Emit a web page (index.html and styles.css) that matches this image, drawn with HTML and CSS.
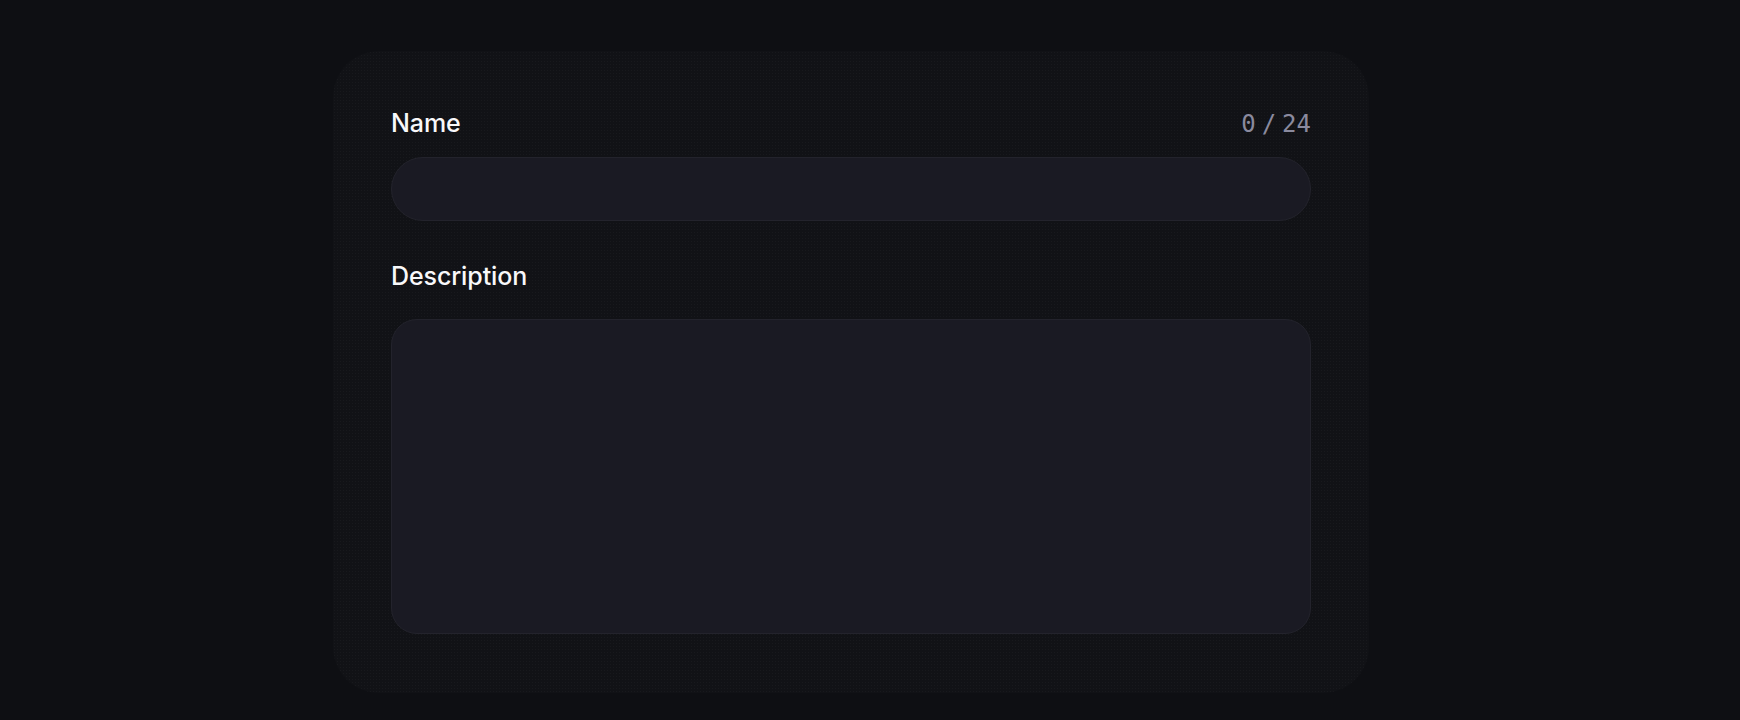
FILE: index.html
```html
<!DOCTYPE html>
<html lang="en">
<head>
<meta charset="utf-8">
<title>Form</title>
<link rel="stylesheet" href="styles.css">
</head>
<body>
<main class="page">
  <form class="card">
    <div class="field field-name">
      <div class="label-row">
        <label class="label" for="name">Name</label>
        <span class="counter"><span>0</span><span>/</span><span>24</span></span>
      </div>
      <input id="name" class="input" type="text" maxlength="24">
    </div>
    <div class="field field-desc">
      <label class="label" for="desc">Description</label>
      <textarea id="desc" class="textarea"></textarea>
    </div>
  </form>
</main>
</body>
</html>
```

FILE: styles.css
```css
* { box-sizing: border-box; }
html, body {
  margin: 0;
  height: 100%;
  background: #0e0f13;
}
body {
  font-family: Inter, "Noto Sans", sans-serif;
  color: #f5f5f7;
}
.page {
  padding: 51px 0 0 333px;
}
.card {
  width: 1036px;
  padding: 58px 58px 59px 58px;
  border-radius: 46px;
  background-color: #111216;
  background-image: radial-gradient(rgba(255,255,255,0.03) 0.6px, transparent 0.9px);
  background-size: 3px 3px;
  display: flex;
  flex-direction: column;
}
.field { display: flex; flex-direction: column; }
.label-row {
  display: flex;
  justify-content: space-between;
  align-items: baseline;
  height: 29px;
}
.label {
  font-size: 25px;
  font-weight: 500;
  line-height: 29px;
  color: #f8f8fa;
  letter-spacing: -0.1px;
}
.counter {
  display: flex;
  gap: 6px;
  font-family: "DejaVu Sans Mono", "Liberation Mono", monospace;
  font-size: 24px;
  color: #8a8a9e;
  font-variant-numeric: slashed-zero;
}
.field-name .label-row { margin-bottom: 19px; }
.input {
  display: block;
  width: 100%;
  height: 64px;
  border-radius: 32px;
  border: 1px solid #23232c;
  background: #1a1a23;
  outline: none;
  padding: 0 24px;
  color: #f5f5f7;
  font: inherit;
}
.field-desc { margin-top: 41px; }
.field-desc .label { margin-bottom: 28px; }
.textarea {
  display: block;
  width: 100%;
  height: 315px;
  border-radius: 26px;
  border: 1px solid #23232c;
  background: #1a1a23;
  outline: none;
  resize: none;
  padding: 20px 24px;
  color: #f5f5f7;
  font: inherit;
}
```
